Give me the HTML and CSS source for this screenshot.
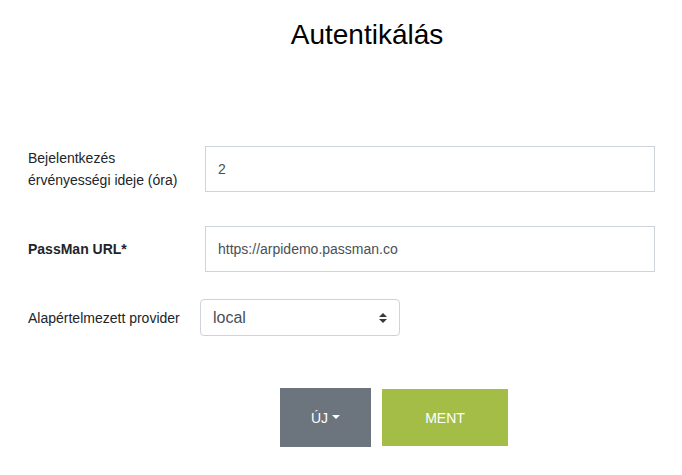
FILE: index.html
```html
<!DOCTYPE html>
<html lang="hu">
<head>
<meta charset="utf-8">
<title>Autentikálás</title>
<link rel="stylesheet" href="styles.css">
</head>
<body>
<div class="page">
  <h1 class="title">Autentikálás</h1>
  <form class="form">
    <div class="row row-first">
      <label class="label">Bejelentkezés érvényességi ideje (óra)</label>
      <input class="input" type="text" value="2">
    </div>
    <div class="row row-second">
      <label class="label label-bold">PassMan URL*</label>
      <input class="input" type="text" value="https://arpidemo.passman.co">
    </div>
    <div class="row row-third">
      <label class="label label-narrow">Alapértelmezett provider</label>
      <div class="select">
        <span class="select-value">local</span>
        <svg class="select-arrows" width="8" height="10" viewBox="0 0 4 5"><path d="M2 0L0 2h4zm0 5L0 3h4z" fill="#343a40"/></svg>
      </div>
    </div>
    <div class="actions">
      <button type="button" class="btn btn-new">ÚJ<span class="caret"></span></button>
      <button type="button" class="btn btn-save">MENT</button>
    </div>
  </form>
</div>
</body>
</html>
```
FILE: styles.css
```css
html, body {
  margin: 0;
  padding: 0;
  background: #ffffff;
}
body {
  font-family: "Liberation Sans", Arial, sans-serif;
  color: #212529;
  font-size: 14px;
}
.page {
  width: 682px;
}
.title {
  margin: 18px 0 0;
  padding-left: 52px;
  font-size: 28px;
  font-weight: normal;
  line-height: 34px;
  text-align: center;
  color: #000;
}
.form {
  margin-top: 94px;
}
.row {
  display: flex;
  align-items: center;
  padding-left: 28px;
}
.row-second {
  margin-top: 34px;
}
.row-third {
  margin-top: 27px;
}
.label {
  box-sizing: border-box;
  width: 177px;
  padding-right: 15px;
  font-size: 14px;
  line-height: 22px;
  color: #212529;
}
.label-bold {
  font-weight: bold;
}
.label-narrow {
  width: 172px;
}
.input {
  box-sizing: border-box;
  width: 450px;
  height: 46px;
  margin: 0;
  padding: 0 12px;
  border: 1px solid #ced4da;
  border-radius: 0;
  font-family: "Liberation Sans", Arial, sans-serif;
  font-size: 14px;
  color: #495057;
  background: #fff;
  outline: none;
}
.select {
  box-sizing: border-box;
  width: 200px;
  height: 37px;
  display: flex;
  align-items: center;
  justify-content: space-between;
  padding: 0 12px;
  border: 1px solid #ced4da;
  border-radius: 4px;
  background: #fff;
}
.select-value {
  font-size: 16px;
  color: #495057;
}
.select-arrows {
  display: block;
}
.actions {
  display: flex;
  align-items: center;
  gap: 11px;
  margin-top: 52px;
  padding-left: 280px;
}
.btn {
  border: none;
  border-radius: 0;
  margin: 0;
  padding: 0;
  font-family: "Liberation Sans", Arial, sans-serif;
  font-size: 14px;
  color: #fff;
  display: flex;
  align-items: center;
  justify-content: center;
}
.btn-new {
  width: 91px;
  height: 59px;
  background: #6c757d;
}
.btn-save {
  width: 126px;
  height: 57px;
  background: #a3bd47;
}
.caret {
  display: inline-block;
  margin-left: 4px;
  width: 0;
  height: 0;
  border-top: 4px solid #fff;
  border-left: 4px solid transparent;
  border-right: 4px solid transparent;
  margin-top: -2px;
}
```
